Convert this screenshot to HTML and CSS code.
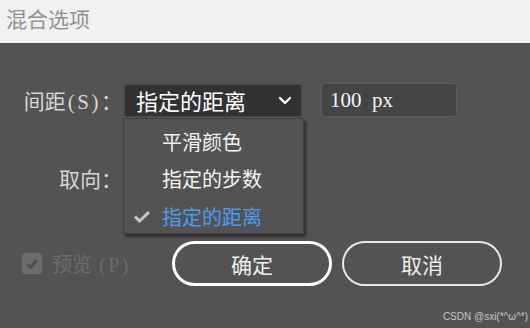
FILE: index.html
```html
<!DOCTYPE html>
<html lang="zh-CN">
<head>
  <meta charset="UTF-8">
  <title>混合选项</title>
  <link rel="stylesheet" href="styles.css">
</head>
<body>
  <!-- Barra de título -->
  <div class="titlebar">混合选项</div>

  <!-- Cuerpo del diálogo -->
  <div class="panel">
    <div class="row">
      <span class="label">间距<span class="key">(S)</span>：</span>
      <div class="select-wrap">
        <div class="select">
          <span>指定的距离</span>
          <svg class="chevron" width="14" height="9" viewBox="0 0 14 9">
            <path d="M2 2 L7 7 L12 2" fill="none" stroke="#fff" stroke-width="2.4" stroke-linecap="round" stroke-linejoin="round"/>
          </svg>
        </div>
        <ul class="menu">
          <li>平滑颜色</li>
          <li>指定的步数</li>
          <li class="selected">
            <svg class="check" width="18" height="13" viewBox="0 0 18 13">
              <path d="M2 6.5 L6.5 11 L16 2" fill="none" stroke="#c8c8c8" stroke-width="3"/>
            </svg>
            指定的距离
          </li>
        </ul>
      </div>
      <div class="input">100  px</div>
    </div>

    <div class="row row-orient">
      <span class="label">取向：</span>
    </div>

    <div class="footer">
      <div class="preview">
        <span class="checkbox">
          <svg width="14" height="12" viewBox="0 0 14 12">
            <path d="M2 6 L5.5 9.5 L12 2" fill="none" stroke="#4f4f4f" stroke-width="3"/>
          </svg>
        </span>
        <span>预览 <span class="key">(P)</span></span>
      </div>
      <button class="btn btn-ok">确定</button>
      <button class="btn btn-cancel">取消</button>
    </div>

    <div class="watermark">CSDN @sxi(*^ω^*)</div>
  </div>
</body>
</html>
```

FILE: styles.css
```css
/* Estructura general */
body {
  margin: 0;
  width: 530px;
  height: 328px;
  overflow: hidden;
  background: #535353;
  font-family: "Liberation Serif", "Noto Sans CJK SC", serif;
}

/* Barra de título clara */
.titlebar {
  height: 43px;
  line-height: 37px;
  padding-left: 6px;
  background: #f1f1f1;
  color: #929292;
  font-size: 21px;
  font-family: "Noto Sans CJK SC", sans-serif;
}

/* Zona oscura con los controles */
.panel {
  position: relative;
  height: 285px;
  padding: 40px 0 0 20px;
  box-sizing: border-box;
  color: #dcdcdc;
}

.row {
  display: flex;
  align-items: center;
  height: 34px;
}

.label {
  width: 102px;
  text-align: right;
  font-size: 21px;
  color: #d6d6d6;
  flex-shrink: 0;
}

/* Letras de atajo entre paréntesis, más espaciadas */
.key {
  letter-spacing: 2.5px;
  padding-left: 2px;
}

/* Desplegable */
.select-wrap {
  position: relative;
  margin-left: 2px;
}

.select {
  display: flex;
  align-items: center;
  justify-content: space-between;
  width: 178px;
  height: 33px;
  padding: 0 8px 0 11px;
  box-sizing: border-box;
  background: #323232;
  border: 1px solid #484848;
  border-radius: 3px;
  color: #fff;
  font-size: 22px;
  font-family: "Noto Sans CJK SC", sans-serif;
}

.chevron {
  margin-right: 1px;
}

/* Lista abierta del desplegable */
.menu {
  position: absolute;
  top: 34px;
  left: -1px;
  z-index: 2;
  width: 181px;
  height: 116px;
  margin: 0;
  padding: 4px 0 0;
  box-sizing: border-box;
  list-style: none;
  background: #535353;
  border: 1px solid #3f3f3f;
  box-shadow: 2px 3px 3px rgba(0, 0, 0, 0.45);
  font-family: "Noto Sans CJK SC", sans-serif;
}

.menu li {
  position: relative;
  height: 37.5px;
  line-height: 37px;
  padding-left: 38px;
  color: #f2f2f2;
  font-size: 20px;
}

.menu li.selected {
  color: #4a9cf0;
}

.check {
  position: absolute;
  left: 9px;
  top: 12px;
}

/* Campo numérico */
.input {
  width: 136px;
  height: 34px;
  margin-left: 19px;
  padding-left: 8px;
  box-sizing: border-box;
  line-height: 32px;
  background: #454545;
  border: 1px solid #5d5d5d;
  border-radius: 3px;
  color: #f4f4f4;
  font-size: 21px;
  white-space: pre;
}

.row-orient {
  margin-top: 46px;
  height: 30px;
}

/* Fila inferior con botones */
.footer {
  display: flex;
  align-items: center;
  margin-top: 48px;
}

.preview {
  display: flex;
  align-items: center;
  gap: 10px;
  width: 150px;
  margin-left: 2px;
  color: #6c6c6c;
  font-size: 20px;
}

.checkbox {
  display: flex;
  align-items: center;
  justify-content: center;
  width: 20px;
  height: 21px;
  border-radius: 3px;
  background: #6c6c6c;
}

.btn {
  width: 160px;
  height: 45px;
  margin: 0;
  padding: 0;
  border-radius: 23px;
  background: transparent;
  box-sizing: border-box;
  font-size: 21px;
  font-family: "Noto Sans CJK SC", sans-serif;
  color: #f0f0f0;
}

.btn-ok {
  border: 3px solid #fff;
}

.btn-cancel {
  margin-left: 10px;
  border: 2px solid #e8e8e8;
}

/* Marca de agua */
.watermark {
  position: absolute;
  right: 2px;
  bottom: 6px;
  font-family: "Liberation Sans", sans-serif;
  font-size: 10px;
  color: #c8c8c8;
}
```
